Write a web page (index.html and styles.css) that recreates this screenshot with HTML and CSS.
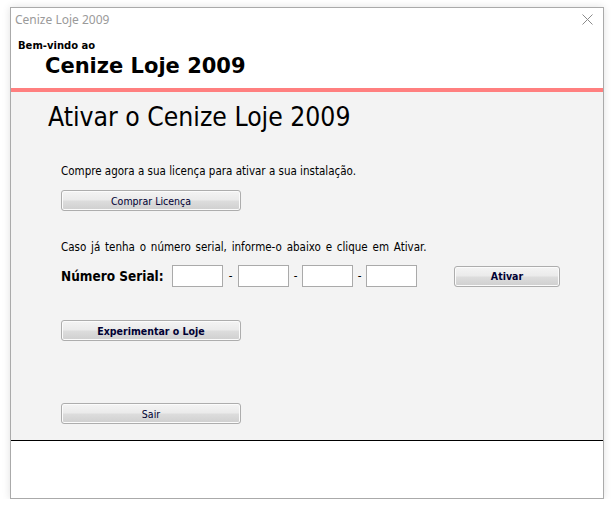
FILE: index.html
```html
<!DOCTYPE html>
<html>
<head>
  <title>Cenize Loje 2009</title>
  <link rel="stylesheet" href="styles.css">
</head>
<body>
  <div class="window">
    <div class="titlebar">
      <span class="title">Cenize Loje 2009</span>
      <svg class="close" width="11" height="11" viewBox="0 0 11 11">
        <path d="M0.5 0.5 L10.5 10.5 M10.5 0.5 L0.5 10.5" stroke="#8a8a8a" stroke-width="1" fill="none"/>
      </svg>
    </div>
    <div class="header">
      <div class="welcome">Bem-vindo ao</div>
      <div class="brand">Cenize Loje 2009</div>
    </div>
    <div class="content">
      <h1>Ativar o Cenize Loje 2009</h1>
      <div class="panel">
        <p class="buy-text">Compre agora a sua licença para ativar a sua instalação.</p>
        <button class="btn btn-buy">Comprar Licença</button>

        <p class="serial-text">Caso já tenha o número serial, informe-o abaixo e clique em Ativar.</p>
        <div class="serial-row">
          <label>Número Serial:</label>
          <input type="text" class="part">
          <span class="dash dash-first">-</span>
          <input type="text" class="part">
          <span class="dash">-</span>
          <input type="text" class="part">
          <span class="dash">-</span>
          <input type="text" class="part">
          <button class="btn btn-bold btn-activate">Ativar</button>
        </div>

        <button class="btn btn-bold btn-trial">Experimentar o Loje</button>
        <button class="btn btn-exit">Sair</button>
      </div>
    </div>
    <div class="footer"></div>
  </div>
</body>
</html>
```

FILE: styles.css
```css
body {
  margin: 0;
  background-color: #ffffff;
  font-family: "DejaVu Sans Condensed", "DejaVu Sans", Tahoma, sans-serif;
}
.window {
  margin: 7px 0 0 10px;
  width: 592px;
  height: 490px;
  border: 1px solid #aaaaaa;
  box-shadow: 0 0 8px rgba(0, 0, 0, 0.12);
  display: flex;
  flex-direction: column;
  background-color: #ffffff;
}
.titlebar {
  height: 22px;
  display: flex;
  align-items: center;
  justify-content: space-between;
  padding: 0 10px 0 4px;
}
.title {
  font-family: "Noto Sans", sans-serif;
  font-size: 12px;
  color: #9a9a9a;
}
.header {
  height: 58px;
  border-bottom: 4px solid #ff7f7f;
  padding-left: 7px;
}
.welcome {
  font-family: "DejaVu Sans", sans-serif;
  font-size: 10px;
  font-weight: bold;
  margin-top: 10px;
}
.brand {
  font-family: "DejaVu Sans", sans-serif;
  font-size: 21px;
  font-weight: bold;
  margin: 3px 0 0 27px;
}
.content {
  flex: 1;
  background-color: #f3f3f3;
  border-bottom: 1px solid #000000;
  padding-left: 37px;
}
h1 {
  font-size: 26.3px;
  font-weight: normal;
  margin: 10px 0 0 0;
}
.panel {
  margin-left: 13px;
  font-size: 11.5px;
}
.panel p {
  margin: 0;
}
.buy-text {
  margin-top: 32px !important;
}
.btn {
  display: block;
  width: 180px;
  height: 21px;
  border: 1px solid #adadad;
  border-radius: 3px;
  background: linear-gradient(#f4f4f4, #ebebeb 45%, #dcdcdc 55%, #cfcfcf);
  box-shadow: inset 0 0 0 1px #fbfbfb;
  font-family: "DejaVu Sans Condensed", "DejaVu Sans", Tahoma, sans-serif;
  font-size: 10.5px;
  color: #000033;
  padding: 0;
}
.btn-bold {
  font-weight: bold;
}
.btn-buy {
  margin-top: 12px;
}
.serial-text {
  margin-top: 29px !important;
  word-spacing: 1.5px;
}
.serial-row {
  display: flex;
  align-items: center;
  margin-top: 11px;
  height: 22px;
}
.serial-row label {
  font-size: 13.5px;
  font-weight: bold;
  width: 111px;
}
.part {
  width: 51px;
  height: 22px;
  box-sizing: border-box;
  border: 1px solid #aaaaaa;
  background-color: #ffffff;
  margin: 0;
}
.dash {
  width: 13px;
  text-align: center;
}
.dash-first {
  width: 15px;
}
.btn-activate {
  width: 106px;
  margin-left: 37px;
}
.btn-trial {
  margin-top: 33px;
}
.btn-exit {
  margin-top: 62px;
}
.footer {
  height: 57px;
}
```
